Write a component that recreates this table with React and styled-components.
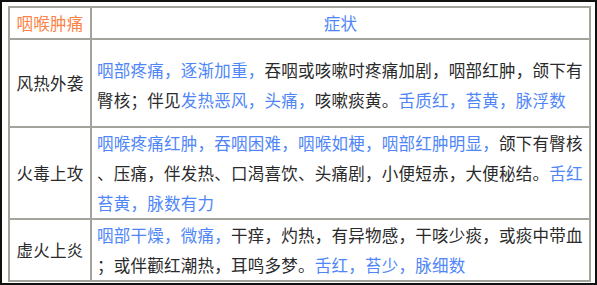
import React from 'react'
import styled, { createGlobalStyle } from 'styled-components'

const Global = createGlobalStyle`
  html, body {
    margin: 0;
    padding: 0;
    background: #fff;
  }
  body {
    font-family: "Noto Sans CJK SC", "Noto Sans", sans-serif;
  }
`

const Frame = styled.div`
  box-sizing: border-box;
  width: 597px;
  height: 285px;
  border: 2px solid #111;
  padding: 4px 0 0 6px;
  background: #fff;
`

const Table = styled.table`
  width: 583px;
  table-layout: fixed;
  border-collapse: collapse;
  border: 2px solid #a3a29b;
  font-size: 16.5px;
  letter-spacing: 0.25px;
  line-height: 30px;
  color: #2a2a2a;
`

const Row = styled.tr`
  height: ${p => p.h}px;
`

const Cell = styled.td`
  border: 2px solid #a3a29b;
  padding: 0;
  vertical-align: middle;
  text-align: ${p => (p.center ? 'center' : 'left')};
  padding-left: ${p => (p.center ? 0 : 5)}px;
  padding-top: ${p => p.pt || 0}px;
  white-space: nowrap;
  overflow: hidden;
  color: ${p => p.tone === 'orange' ? '#fb8347' : p.tone === 'blue' ? '#4f86f7' : '#2a2a2a'};
`

const Line = styled.div`
  height: 30px;
`

const Blue = styled.span`
  color: #4f86f7;
`

const rows = [
  {
    name: '风热外袭',
    h: 88,
    pt: 3,
    lines: [
      [['咽部疼痛，逐渐加重，', 1], ['吞咽或咳嗽时疼痛加剧，咽部红肿，颌下有', 0]],
      [['臀核；伴见', 0], ['发热恶风，头痛，', 1], ['咳嗽痰黄。', 0], ['舌质红，苔黄，脉浮数', 1]],
    ],
  },
  {
    name: '火毒上攻',
    h: 92,
    lines: [
      [['咽喉疼痛红肿，吞咽困难，咽喉如梗，咽部红肿明显，', 1], ['颌下有臀核', 0]],
      [['、压痛，伴发热、口渴喜饮、头痛剧，小便短赤，大便秘结。', 0], ['舌红', 1]],
      [['苔黄，脉数有力', 1]],
    ],
  },
  {
    name: '虚火上炎',
    h: 60,
    lines: [
      [['咽部干燥，微痛，', 1], ['干痒，灼热，有异物感，干咳少痰，或痰中带血', 0]],
      [['；或伴颧红潮热，耳鸣多梦。', 0], ['舌红，苔少，脉细数', 1]],
    ],
  },
]

export default function App() {
  return (
    <>
      <Global />
      <Frame>
        <Table>
          <colgroup>
            <col style={{ width: 82 }} />
            <col />
          </colgroup>
          <tbody>
            <Row h={31}>
              <Cell center tone="orange">咽喉肿痛</Cell>
              <Cell center tone="blue">症状</Cell>
            </Row>
            {rows.map(r => (
              <Row key={r.name} h={r.h}>
                <Cell center>{r.name}</Cell>
                <Cell pt={r.pt}>
                  {r.lines.map((line, i) => (
                    <Line key={i}>
                      {line.map(([t, b], j) => (b ? <Blue key={j}>{t}</Blue> : <span key={j}>{t}</span>))}
                    </Line>
                  ))}
                </Cell>
              </Row>
            ))}
          </tbody>
        </Table>
      </Frame>
    </>
  )
}
